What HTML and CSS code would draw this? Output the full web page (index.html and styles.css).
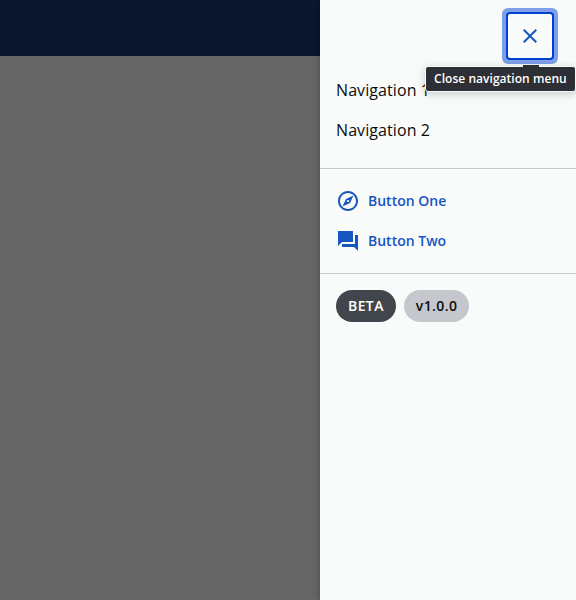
FILE: index.html
```html
<!DOCTYPE html>
<html lang="en">
<head>
<meta charset="utf-8">
<title>Navigation menu</title>
<link rel="stylesheet" href="styles.css">
</head>
<body>
<div class="app">
  <div class="page"><header class="top-bar"></header></div>
  <aside class="drawer">
    <div class="drawer-top">
      <div class="focus-ring">
        <button class="close" aria-label="Close navigation menu">
          <svg width="24" height="24" viewBox="0 0 24 24"><path fill="currentColor" d="M19 6.41 17.59 5 12 10.59 6.41 5 5 6.41 10.59 12 5 17.59 6.41 19 12 13.41 17.59 19 19 17.59 13.41 12z"/></svg>
        </button>
      </div>
      <div class="tooltip">Close navigation menu</div>
    </div>
    <nav class="links">
      <a class="link">Navigation 1</a>
      <a class="link">Navigation 2</a>
    </nav>
    <div class="actions">
      <a class="action">
        <svg width="24" height="24" viewBox="0 0 24 24"><path fill="currentColor" d="M12 2C6.48 2 2 6.48 2 12s4.480 10 10 10 10-4.480 10-10S17.520 2 12 2zm0 18c-4.410 0-8-3.590-8-8s3.590-8 8-8 8 3.590 8 8-3.590 8-8 8zm-5.500-2.500 7.510-3.490L17.500 6.500 9.990 9.990 6.500 17.500zm5.500-6.600c.61 0 1.100.49 1.100 1.100s-.49 1.100-1.100 1.100-1.100-.49-1.100-1.100.49-1.100 1.100-1.100z"/></svg>
        <span>Button One</span>
      </a>
      <a class="action">
        <svg width="24" height="24" viewBox="0 0 24 24"><path fill="currentColor" d="M22 6h-3v9H6v3h12l4 4V6zm-5 7V2H2v15l4-4h11z"/></svg>
        <span>Button Two</span>
      </a>
    </div>
    <div class="status">
      <span class="chip chip-dark">BETA</span>
      <span class="chip">v1.0.0</span>
    </div>
  </aside>
</div>
</body>
</html>
```

FILE: styles.css
```css
* { box-sizing: border-box; }
body {
  margin: 0;
  font-family: "Open Sans", sans-serif;
  color: #0b0c0c;
  overflow: hidden;
}
svg { display: block; }
.app { display: flex; height: 600px; }
.page { width: 320px; background: #666; }
.top-bar { height: 56px; background: #0a172f; }
.drawer {
  width: 256px;
  background: #f9fbfb;
  box-shadow: 0 0 8px rgba(0, 0, 0, 0.3);
}
.drawer-top {
  position: relative;
  display: flex;
  align-items: flex-start;
  justify-content: flex-end;
  height: 70px;
  padding: 8px 18px 0 0;
}
.focus-ring {
  padding: 4px;
  border-radius: 6px;
  background: #809fe9;
}
.close {
  --dot: linear-gradient(#d3dff5, #d3dff5);
  display: flex;
  align-items: center;
  justify-content: center;
  width: 48px;
  height: 48px;
  padding: 0;
  border: 2px solid #0041d3;
  border-radius: 4px;
  background:
    var(--dot) 2px 2px / 1px 1px no-repeat,
    var(--dot) 41px 2px / 1px 1px no-repeat,
    var(--dot) 2px 41px / 1px 1px no-repeat,
    var(--dot) 41px 41px / 1px 1px no-repeat,
    #f9fbfb;
  color: #1856bf;
  box-shadow: inset 0 0 0 2px #fff;
}
.tooltip {
  position: absolute;
  top: 66px;
  right: 0;
  width: 151px;
  height: 26px;
  padding-left: 8px;
  border: 1px solid #f9fbfb;
  border-radius: 3px;
  background: #2d2f34;
  color: #fff;
  font-size: 12px;
  font-weight: 600;
  line-height: 24px;
  letter-spacing: 0.04px;
  white-space: nowrap;
  box-shadow: 0 2px 8px rgba(0, 0, 0, 0.2);
}
.tooltip::before {
  content: "";
  position: absolute;
  top: -2px;
  left: 97px;
  width: 16px;
  height: 3px;
  background: #2d2f34;
}
.links {
  height: 99px;
  border-bottom: 1px solid #c5c7cb;
}
.link {
  display: block;
  padding: 0 16px;
  font-size: 16px;
  line-height: 40px;
  letter-spacing: 0.08px;
}
.actions {
  height: 105px;
  padding: 12px 16px;
  border-bottom: 1px solid #c5c7cb;
}
.action {
  display: flex;
  align-items: center;
  gap: 8px;
  height: 40px;
  color: #1856bf;
  font-size: 14px;
  font-weight: 600;
  line-height: 24px;
}
.status { display: flex; gap: 8px; padding: 16px; }
.chip {
  height: 32px;
  padding: 0 12px;
  border-radius: 16px;
  background: #c5c7cd;
  font-size: 14px;
  font-weight: 600;
  line-height: 32px;
  letter-spacing: 0.4px;
}
.chip-dark { background: #41464d; color: #fff; }
```
